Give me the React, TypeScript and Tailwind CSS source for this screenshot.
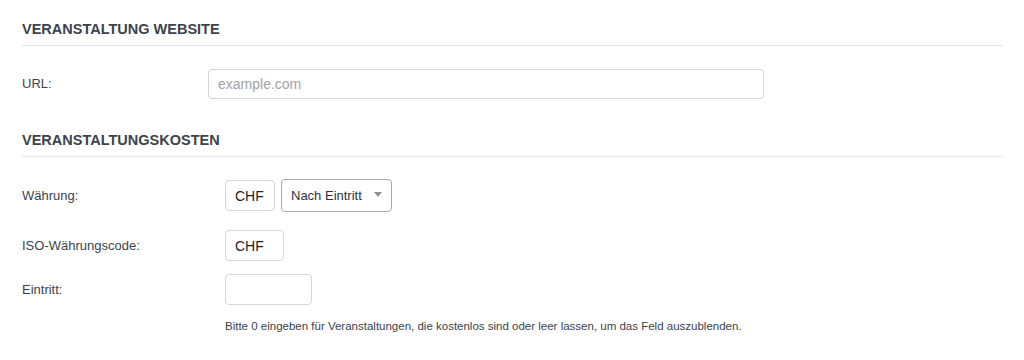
import React from "react";

const font = { fontFamily: '"Liberation Sans", Arial, sans-serif' };

function SectionHeading({ title, className = "" }: { title: string; className?: string }) {
  return (
    <div className={`border-b border-[#e4e4e6] pb-[7px] ${className}`}>
      <h2 className="text-[14.5px] font-bold leading-[18px] text-[#3c434a]">{title}</h2>
    </div>
  );
}

function Row({
  label,
  labelWidth,
  children,
  className = "",
}: {
  label: string;
  labelWidth: string;
  children: React.ReactNode;
  className?: string;
}) {
  return (
    <div className={`flex items-center ${className}`}>
      <div className={`${labelWidth} shrink-0 text-[13px] text-[#3c434a]`}>{label}</div>
      <div className="flex items-center gap-[6px]">{children}</div>
    </div>
  );
}

export default function App() {
  return (
    <div
      className="min-h-[360px] w-[1024px] bg-white pl-[22px] pr-[21px] pt-[20px] text-[#3c434a]"
      style={font}
    >
      <SectionHeading title="VERANSTALTUNG WEBSITE" />

      <Row label="URL:" labelWidth="w-[186px]" className="mt-[23px]">
        <input
          type="text"
          placeholder="example.com"
          className="h-[30px] w-[556px] rounded-[4px] border border-[#d6d6d8] px-[9px] text-[14px] text-[#3c434a] outline-none placeholder:text-[#a0a3a6]"
        />
      </Row>

      <SectionHeading title="VERANSTALTUNGSKOSTEN" className="mt-[32px]" />

      <Row label="Währung:" labelWidth="w-[203px]" className="mt-[22px]">
        <input
          type="text"
          defaultValue="CHF"
          className="h-[31px] w-[50px] rounded-[4px] border border-[#d6d6d8] px-[9px] text-[14px] text-[#1d2327] outline-none"
        />
        <div className="flex h-[33px] w-[111px] items-center justify-between rounded-[4px] border border-[#a7aaad] pl-[9px] pr-[9px] text-[13px] text-[#2c3338]">
          <span>Nach Eintritt</span>
          <svg width="8" height="5" viewBox="0 0 8 5" className="mb-[2px]">
            <path d="M0 0 L8 0 L4 5 Z" fill="#8c8f94" />
          </svg>
        </div>
      </Row>

      <Row label="ISO-Währungscode:" labelWidth="w-[203px]" className="mt-[18px]">
        <input
          type="text"
          defaultValue="CHF"
          className="h-[31px] w-[59px] rounded-[4px] border border-[#d6d6d8] px-[9px] text-[14px] text-[#1d2327] outline-none"
        />
      </Row>

      <Row label="Eintritt:" labelWidth="w-[203px]" className="mt-[13px]">
        <input
          type="text"
          className="h-[31px] w-[87px] rounded-[4px] border border-[#d6d6d8] px-[9px] text-[14px] text-[#1d2327] outline-none"
        />
      </Row>

      <p className="ml-[203px] mt-[14px] text-[11.5px] leading-[15px] text-[#3c434a]">
        Bitte 0 eingeben für Veranstaltungen, die kostenlos sind oder leer lassen, um das Feld auszublenden.
      </p>
    </div>
  );
}
